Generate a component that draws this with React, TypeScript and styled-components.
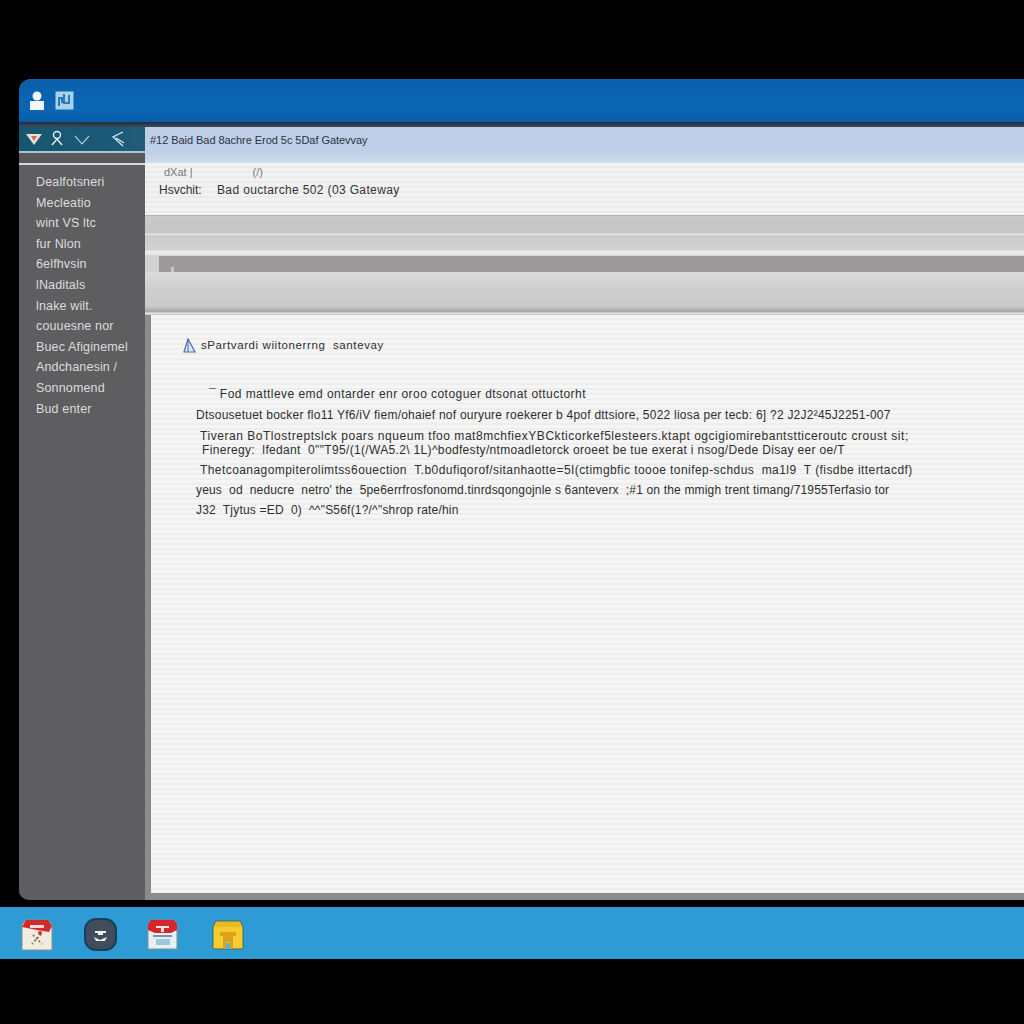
import React from "react";
import styled, { createGlobalStyle } from "styled-components";

const GlobalStyle = createGlobalStyle`
  html, body {
    margin: 0;
    padding: 0;
    background: #000;
  }
  body {
    font-family: "Liberation Sans", Arial, sans-serif;
  }
`;

const Page = styled.div`
  width: 1024px;
  height: 1024px;
  overflow: hidden;
  background: #000;
  display: flex;
  flex-direction: column;
  padding-top: 79px;
  box-sizing: border-box;
`;

const Window = styled.div`
  margin-left: 19px;
  height: 821px;
  display: flex;
  flex-direction: column;
  border-radius: 12px 0 0 10px;
  overflow: hidden;
  background: #5c5c5f;
`;

const TitleBar = styled.div`
  height: 43px;
  flex: none;
  display: flex;
  align-items: center;
  gap: 10px;
  padding-left: 10px;
  box-sizing: border-box;
  background: linear-gradient(#0b5fab, #0a66b4 70%, #0a5ea8);
`;

const Divider = styled.div`
  height: 5px;
  flex: none;
  background: linear-gradient(#1d2f45, #3c4a5c);
`;

const Body = styled.div`
  flex: 1;
  display: flex;
  min-height: 0;
`;

const Sidebar = styled.div`
  width: 126px;
  flex: none;
  display: flex;
  flex-direction: column;
  background: #5e5e61;
`;

const SideTools = styled.div`
  height: 24px;
  flex: none;
  display: flex;
  align-items: center;
  padding-left: 6px;
  background: linear-gradient(90deg, #17566f, #1a5a76 70%, #245c78);
  border-bottom: 2px solid #a9c6d2;
`;

const SideGap = styled.div`
  height: 10px;
  flex: none;
  background: #58585b;
  border-bottom: 2px solid #d8d8d8;
`;

const SideList = styled.ul`
  list-style: none;
  margin: 0;
  padding: 7px 0 0 17px;
`;

const SideItem = styled.li`
  height: 20.6px;
  line-height: 20.6px;
  font-size: 12.5px;
  letter-spacing: 0.15px;
  color: #dcdcdc;
  white-space: nowrap;
`;

const Main = styled.div`
  flex: 1;
  min-width: 0;
  display: flex;
  flex-direction: column;
`;

const MainHeader = styled.div`
  height: 36px;
  flex: none;
  display: flex;
  align-items: center;
  padding: 0 0 10px 5px;
  box-sizing: border-box;
  font-size: 11px;
  letter-spacing: -0.05px;
  color: #2a3444;
  background: linear-gradient(#bccde6, #c0d0e8 70%, #d0dbec);
`;

const Summary = styled.div`
  height: 53px;
  flex: none;
  box-sizing: border-box;
  padding-top: 1px;
  background: repeating-linear-gradient(#f2f2f2 0 3px, #ebebeb 3px 5px);
  border-bottom: 1px solid #b5b5b5;
`;

const SummaryTabs = styled.div`
  height: 15px;
  display: flex;
  align-items: center;
  padding-left: 19px;
  gap: 60px;
  font-size: 11px;
  color: #777;
`;

const SummaryRow = styled.div`
  display: flex;
  padding: 4px 0 0 14px;
  font-size: 12px;
  color: #333;
`;

const SummaryLabel = styled.span`
  width: 58px;
  flex: none;
`;

const SummaryValue = styled.span`
  letter-spacing: 0.36px;
`;

const Toolbars = styled.div`
  height: 99px;
  flex: none;
  display: flex;
  flex-direction: column;
`;

const ToolBand = styled.div<{ $h: number; $bg: string }>`
  height: ${({ $h }) => $h}px;
  flex: none;
  background: ${({ $bg }) => $bg};
`;

const ProgressRow = styled.div`
  height: 16px;
  flex: none;
  padding-left: 14px;
  background: #d2d2d2;
`;

const ProgressBand = styled.div`
  height: 100%;
  background: #9c9a9b;
  position: relative;
  &::after {
    content: "";
    position: absolute;
    left: 12px;
    bottom: 0;
    width: 3px;
    height: 5px;
    background: #c9c9c9;
  }
`;

const ContentArea = styled.div`
  flex: 1;
  min-height: 0;
  display: flex;
  background: #8b8b8e;
  padding-bottom: 7px;
`;

const ContentSheet = styled.div`
  flex: 1;
  margin-left: 6px;
  box-sizing: border-box;
  padding: 20px 0 0 32px;
  background: repeating-linear-gradient(#f5f5f5 0 3px, #eeeeee 3px 5px);
`;

const Heading = styled.div`
  display: flex;
  align-items: center;
  gap: 5px;
  height: 20px;
  font-size: 11.5px;
  letter-spacing: 0.6px;
  color: #2f2f2f;
  margin-bottom: 32px;
  white-space: pre;
`;

const Line = styled.div<{ $indent: number; $h: number; $spacing: number }>`
  height: ${({ $h }) => $h}px;
  line-height: 14px;
  padding-left: ${({ $indent }) => $indent}px;
  letter-spacing: ${({ $spacing }) => $spacing}px;
  font-size: 12px;
  color: #2e2e2e;
  white-space: pre;
`;

const Taskbar = styled.div`
  margin-top: 7px;
  height: 52px;
  flex: none;
  display: flex;
  align-items: center;
  padding: 3px 0 0 21px;
  box-sizing: border-box;
  background: #2f9bd4;
`;

const TaskIcon = styled.div<{ $gap: number }>`
  display: flex;
  margin-left: ${({ $gap }) => $gap}px;
`;

const sideItems = [
  "Dealfotsneri",
  "Mecleatio",
  "wint VS ltc",
  "fur Nlon",
  "6elfhvsin",
  "lNaditals",
  "lnake wilt.",
  "couuesne nor",
  "Buec Afiginemel",
  "Andchanesin /",
  "Sonnomend",
  "Bud enter",
];

const bodyLines = [
  { text: "¯ Fod mattleve emd ontarder enr oroo cotoguer dtsonat ottuctorht", indent: 26, h: 21, spacing: 0.45 },
  { text: "Dtsousetuet bocker flo11 Yf6/iV fiem/ohaief nof ouryure roekerer b 4pof dttsiore, 5022 liosa per tecb: 6] ?2 J2J2²45J2251-007", indent: 13, h: 21, spacing: 0.24 },
  { text: "Tiveran BoTlostreptslck poars nqueum tfoo mat8mchfiexYBCkticorkef5lesteers.ktapt ogcigiomirebantstticeroutc croust sit;", indent: 17, h: 14, spacing: 0.54 },
  { text: "Fineregy:  lfedant  0\"\"T95/(1(/WA5.2\\ 1L)^bodfesty/ntmoadletorck oroeet be tue exerat i nsog/Dede Disay eer oe/T", indent: 19, h: 20, spacing: 0.335 },
  { text: "Thetcoanagompiterolimtss6ouection  T.b0dufiqorof/sitanhaotte=5I(ctimgbfic toooe tonifep-schdus  ma1l9  T (fisdbe ittertacdf)", indent: 17, h: 20, spacing: 0.43 },
  { text: "yeus  od  neducre  netro' the  5pe6errfrosfonomd.tinrdsqongojnle s 6anteverx  ;#1 on the mmigh trent timang/71955Terfasio tor", indent: 13, h: 20, spacing: 0.17 },
  { text: "J32  Tjytus =ED  0)  ^^\"S56f(1?/^\"shrop rate/hin", indent: 13, h: 20, spacing: 0.2 },
];

const UserIcon = () => (
  <svg width="16" height="20" viewBox="0 0 16 20">
    <circle cx="8" cy="5" r="4.5" fill="#f2f6fa" />
    <path d="M1 10h14v9H1z" fill="#f2f6fa" />
  </svg>
);

const DocIcon = () => (
  <svg width="19" height="19" viewBox="0 0 19 19">
    <rect x="0.5" y="0.5" width="18" height="18" fill="#a9d2ea" />
    <path d="M4 15V7h3v5M9 3v9h5V4" fill="none" stroke="#2a7cb8" strokeWidth="2" />
  </svg>
);

const ToolGlyphs = () => (
  <svg width="110" height="20" viewBox="0 0 110 20">
    <path d="M1 5h16l-8 11z" fill="#e9dfd6" />
    <path d="M6 7h6l-3 5z" fill="#d2704c" />
    <circle cx="32" cy="6" r="3.5" fill="none" stroke="#e6f0f4" strokeWidth="1.4" />
    <path d="M27 16l5-6 5 6" fill="none" stroke="#e6f0f4" strokeWidth="1.4" />
    <path d="M50 7l7 8 7-8" fill="none" stroke="#cfe3ec" strokeWidth="1.1" />
    <path d="M98 3L88 8l10 9M91 9l8 5" fill="none" stroke="#dcebf1" strokeWidth="1.2" />
  </svg>
);

const HeadingIcon = () => (
  <svg width="13" height="15" viewBox="0 0 13 15">
    <path d="M1 14L5 1l7 13z" fill="#dfe7f2" stroke="#4a6ea8" strokeWidth="1.2" />
    <path d="M5 1v13" stroke="#4a6ea8" />
  </svg>
);

const MailIcon = () => (
  <svg width="32" height="32" viewBox="0 0 32 32">
    <path d="M5 1h22l4 5v25H1V6z" fill="#f0ece2" stroke="#8b8f92" />
    <path d="M5 1h22l4 6-3 6-12-2-15-3z" fill="#d22a2a" />
    <path d="M9 6h14v3H9z" fill="#f4d5cf" />
    <path d="M12 16l9 9M20 15l-9 10" stroke="#8f7b5e" strokeWidth="2" strokeDasharray="2 2" />
    <circle cx="19" cy="14" r="2" fill="#c9352b" />
  </svg>
);

const RoundIcon = () => (
  <svg width="33" height="33" viewBox="0 0 33 33">
    <rect x="1" y="1" width="31" height="31" rx="11" fill="#414c5c" stroke="#173f60" strokeWidth="2" />
    <path d="M11 13h11v2h-3v2h-5v-2h-3zM10 19l6 3 7-3-2 4h-9z" fill="#eef0f2" />
  </svg>
);

const CalendarIcon = () => (
  <svg width="31" height="31" viewBox="0 0 31 31">
    <path d="M4 1h23l3 4v25H1V5z" fill="#e8eef2" stroke="#7f8f9a" />
    <path d="M4 1h23l3 4v6l-6 3H8l-7-3V5z" fill="#d5262c" />
    <path d="M9 7h13v2h-5v4h-3V9H9z" fill="#f6e6e2" />
    <path d="M6 16h19v2H6z" fill="#7e93a6" />
    <path d="M9 20h14v6H9z" fill="#9cc8dc" />
  </svg>
);

const FolderIcon = () => (
  <svg width="32" height="30" viewBox="0 0 32 30">
    <path d="M4 1h24l3 6v22H1V7z" fill="#f7cc32" stroke="#3d6a58" />
    <path d="M4 2h24l2 5H2z" fill="#e9bc24" />
    <path d="M8 12h16v4h-3v13h-3v-7h-4v7h-3V16H8z" fill="#dba31a" />
    <path d="M14 23h4v6h-4z" fill="#5cb0dc" />
  </svg>
);

const App: React.FC = () => {
  return (
    <>
      <GlobalStyle />
      <Page>
        <Window>
          <TitleBar>
            <UserIcon />
            <DocIcon />
          </TitleBar>
          <Divider />
          <Body>
            <Sidebar>
              <SideTools>
                <ToolGlyphs />
              </SideTools>
              <SideGap />
              <SideList>
                {sideItems.map((item) => (
                  <SideItem key={item}>{item}</SideItem>
                ))}
              </SideList>
            </Sidebar>
            <Main>
              <MainHeader>#12  Baid Bad 8achre Erod 5c 5Daf Gatevvay</MainHeader>
              <Summary>
                <SummaryTabs>
                  <span>dXat |</span>
                  <span>(/)</span>
                </SummaryTabs>
                <SummaryRow>
                  <SummaryLabel>Hsvchit:</SummaryLabel>
                  <SummaryValue>Bad ouctarche 502 (03 Gateway</SummaryValue>
                </SummaryRow>
              </Summary>
              <Toolbars>
                <ToolBand $h={40} $bg="linear-gradient(#c9c9c9, #c6c6c6 42%, #e8e8e8 45%, #cbcbcb 50%, #d2d2d2 85%, #ebebeb 88%, #e6e6e6 97%, #c8c8c8)" />
                <ProgressRow>
                  <ProgressBand />
                </ProgressRow>
                <ToolBand $h={43} $bg="linear-gradient(#dcdcdc, #cecece 40%, #c9c9c9 80%, #a9a9a9 90%, #a9a9a9 92%, #e8e8e8 96%, #bdbdbd)" />
              </Toolbars>
              <ContentArea>
                <ContentSheet>
                  <Heading>
                    <HeadingIcon />
                    <span>sPartvardi wiitonerrng  santevay</span>
                  </Heading>
                  {bodyLines.map((line) => (
                    <Line key={line.text} $indent={line.indent} $h={line.h} $spacing={line.spacing}>
                      {line.text}
                    </Line>
                  ))}
                </ContentSheet>
              </ContentArea>
            </Main>
          </Body>
        </Window>
        <Taskbar>
          <TaskIcon $gap={0}>
            <MailIcon />
          </TaskIcon>
          <TaskIcon $gap={31}>
            <RoundIcon />
          </TaskIcon>
          <TaskIcon $gap={30}>
            <CalendarIcon />
          </TaskIcon>
          <TaskIcon $gap={34}>
            <FolderIcon />
          </TaskIcon>
        </Taskbar>
      </Page>
    </>
  );
};

export default App;
